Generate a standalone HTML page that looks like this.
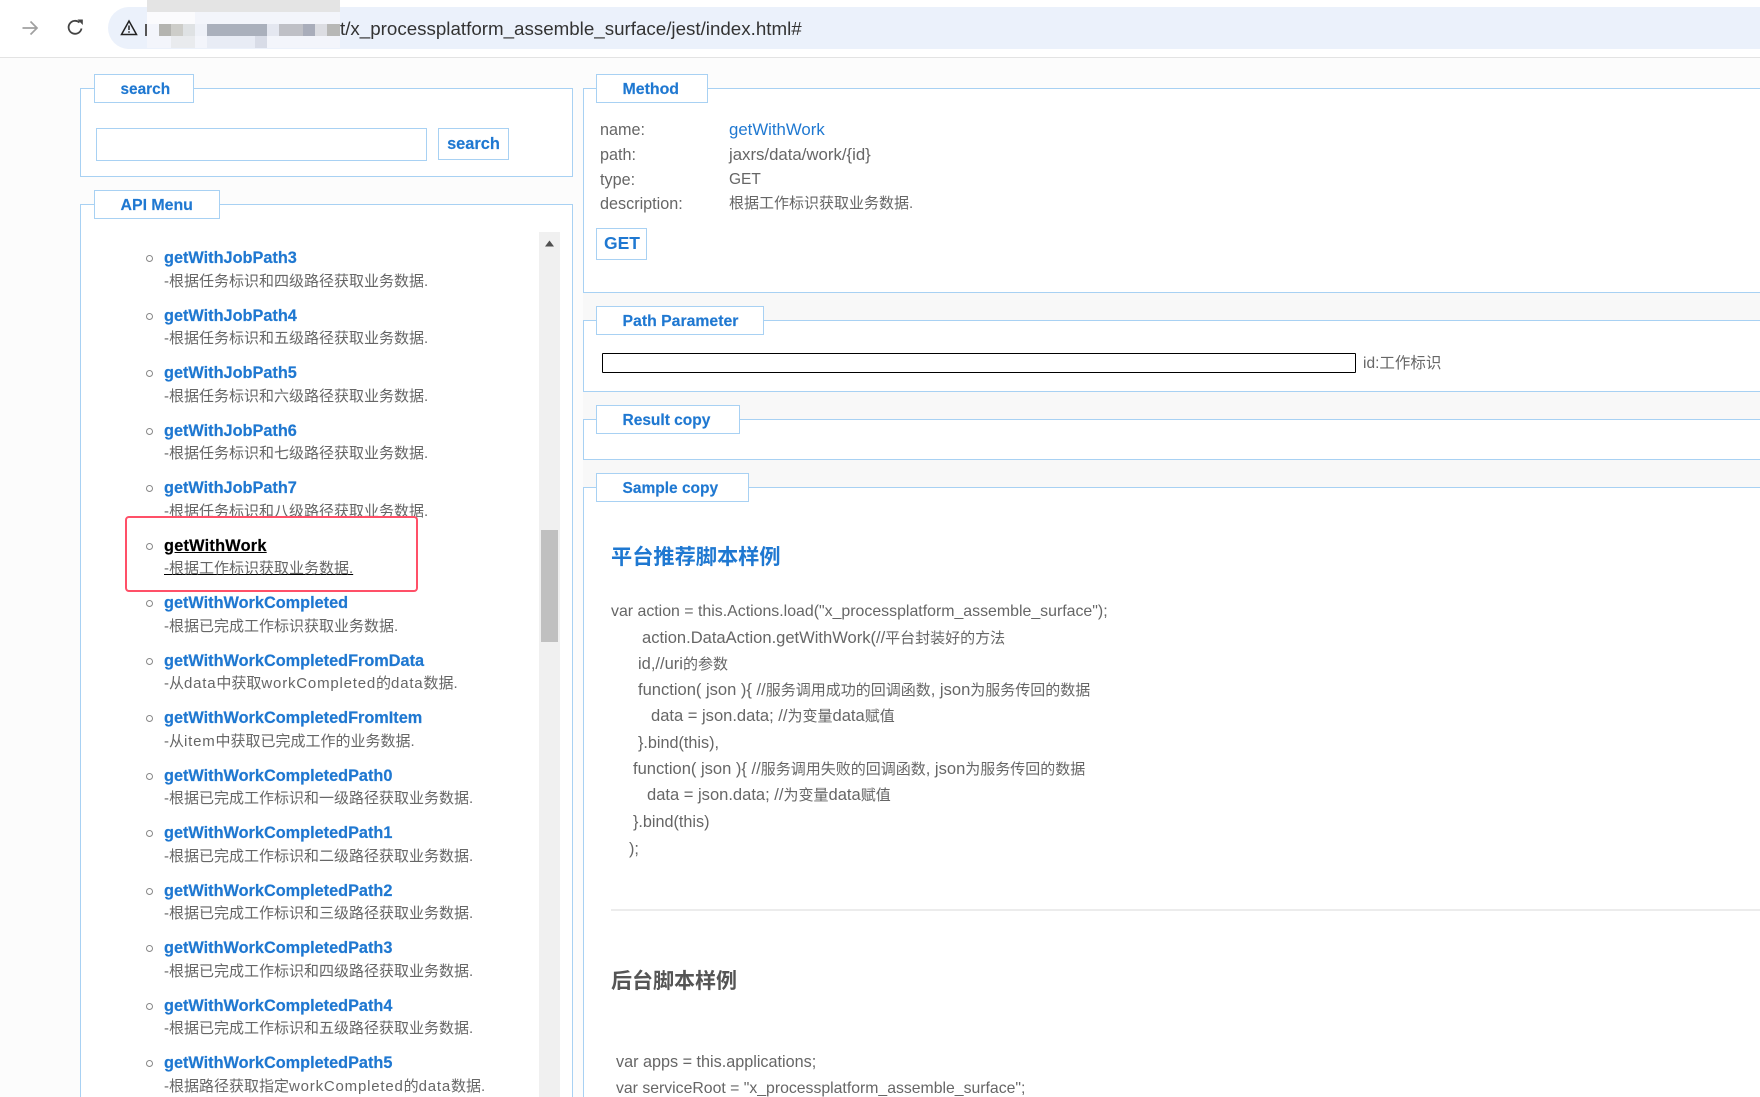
<!DOCTYPE html>
<html lang="zh">
<head>
<meta charset="utf-8">
<title>jest</title>
<style>
html,body{margin:0;padding:0;width:1760px;height:1097px;overflow:hidden;background:#fcfcfc}
body{position:relative;font-family:"Liberation Sans","Noto Sans CJK SC",sans-serif;font-size:15px;color:#666}
div,span{position:absolute;box-sizing:border-box;white-space:nowrap}
em{font-style:normal}
.fs{border:1.5px solid #a8d1f3;background:#fff}
.lg{border:1.5px solid #a8d1f3;background:#fff;color:#1f78d1;font-weight:bold;font-size:15.9px;line-height:29px;padding-left:25.5px;-webkit-text-stroke:.15px #1f78d1}
.t{left:164px;margin-top:1px;color:#1f78d1;font-weight:bold;font-size:16.3px;line-height:20px;-webkit-text-stroke:.2px #1f78d1}
.d{left:164px;margin-top:2px;color:#666;font-size:15px;line-height:20px}
.d em{letter-spacing:.8px}
.b{left:146px;margin-top:1px;width:7px;height:7px;border:1.5px solid #888;border-radius:50%;background:#fff}
.r{left:600px;font-size:16.2px;line-height:20px;color:#666}
.v{left:729px;font-size:16.8px;line-height:20px;color:#666}
.c{font-size:16.2px;line-height:20px;color:#666}
.c em{font-size:15px}
.h{margin-top:1px;font-size:21.2px;line-height:28px;font-weight:bold}
.m{height:12px}
</style>
</head>
<body>
<!-- toolbar -->
<div style="left:0;top:0;width:1760px;height:58px;background:#fff;border-bottom:1.5px solid #e3e3e3"></div>
<svg style="position:absolute;left:20px;top:18px" width="20" height="20" viewBox="0 0 20 20"><path d="M2.500 10H17M10.500 3.500L17 10L10.500 16.500" fill="none" stroke="#a0a0a0" stroke-width="1.700"/></svg>
<svg style="position:absolute;left:65px;top:17px" width="21" height="21" viewBox="0 0 21 21"><path d="M16.500 11.500A6.500 6.500 0 1 1 14.500 5.500" fill="none" stroke="#444" stroke-width="1.800"/><path d="M12.500 2.500H17.800V8Z" fill="#444"/></svg>
<div style="left:108px;top:7px;width:1680px;height:42px;background:#ebf1fb;border-radius:21px"></div>
<svg style="position:absolute;left:120px;top:19px" width="18" height="17" viewBox="0 0 18 17"><path d="M9 2L16.500 15.500H1.500Z" fill="none" stroke="#222" stroke-width="1.500"/><path d="M9 6.500V11M9 12.200V13.800" stroke="#222" stroke-width="1.500"/></svg>
<span style="left:340px;top:18px;font-size:18.75px;line-height:22px;color:#333">t/x_processplatform_assemble_surface/jest/index.html#</span>
<!-- redaction mosaic -->
<div style="left:147px;top:0;width:193px;height:12px;background:#e4e4e4"></div>
<div style="left:147px;top:12px;width:193px;height:36px;background:#f3f5fb"></div>
<div class="m" style="left:159px;top:24px;width:12px;background:#b4b4b0"></div>
<div class="m" style="left:171px;top:24px;width:12px;background:#cdcdc9"></div>
<div class="m" style="left:183px;top:24px;width:12px;background:#dfe2e4"></div>
<div class="m" style="left:195px;top:24px;width:12px;background:#eef1f8"></div>
<div class="m" style="left:207px;top:24px;width:60px;background:#aab0bc"></div>
<div class="m" style="left:267px;top:24px;width:12px;background:#e4e7f0"></div>
<div class="m" style="left:279px;top:24px;width:24px;background:#bfc0c6"></div>
<div class="m" style="left:303px;top:24px;width:12px;background:#a9adba"></div>
<div class="m" style="left:315px;top:24px;width:12px;background:#dcdde2"></div>
<div class="m" style="left:327px;top:24px;width:13px;background:#b8b8b6"></div>
<div class="m" style="left:171px;top:36px;width:24px;background:#e9ebee"></div>
<div class="m" style="left:207px;top:36px;width:48px;background:#e8ecf5"></div>
<div class="m" style="left:255px;top:36px;width:12px;background:#d8dce7"></div>
<div class="m" style="left:147px;top:12px;width:48px;background:#fbfbfd"></div>
<div style="left:145px;top:24px;width:2px;height:12px;background:#555"></div>

<!-- strips -->
<div style="left:583px;top:292px;width:1177px;height:28px;background:#f8f8f8"></div>
<div style="left:583px;top:391px;width:1177px;height:28px;background:#f8f8f8"></div>
<div style="left:583px;top:459px;width:1177px;height:28px;background:#f8f8f8"></div>

<!-- search -->
<div class="fs" style="left:80px;top:88px;width:493px;height:89px"></div>
<div class="lg" style="left:94px;top:74px;width:100px;height:29px;font-size:15.4px;line-height:30px">search</div>
<div style="left:96px;top:128px;width:331px;height:33px;border:1.5px solid #a8d1f3;background:#fff"></div>
<div style="left:438px;top:128px;width:71px;height:32px;border:1.5px solid #a8d1f3;background:#fff;color:#1f78d1;font-weight:bold;font-size:16.4px;line-height:31px;text-align:center;-webkit-text-stroke:.15px #1f78d1">search</div>

<!-- api menu -->
<div class="fs" style="left:80px;top:204px;width:493px;height:920px"></div>
<div class="lg" style="left:94px;top:190px;width:126px;height:29px">API Menu</div>
<div style="left:539px;top:232px;width:21px;height:865px;background:#f0f0f0"></div>
<svg style="position:absolute;left:544px;top:240px" width="11" height="7" viewBox="0 0 11 7"><path d="M5.500 0.500L10 6.500H1Z" fill="#505050"/></svg>
<div style="left:541px;top:530px;width:17px;height:112px;background:#c0c0c0"></div>

<div class="b" style="top:254px"></div><div class="t" style="top:247px">getWithJobPath3</div><div class="d" style="top:270px">-根据任务标识和四级路径获取业务数据.</div>
<div class="b" style="top:312px"></div><div class="t" style="top:305px">getWithJobPath4</div><div class="d" style="top:327px">-根据任务标识和五级路径获取业务数据.</div>
<div class="b" style="top:369px"></div><div class="t" style="top:362px">getWithJobPath5</div><div class="d" style="top:385px">-根据任务标识和六级路径获取业务数据.</div>
<div class="b" style="top:427px"></div><div class="t" style="top:420px">getWithJobPath6</div><div class="d" style="top:442px">-根据任务标识和七级路径获取业务数据.</div>
<div class="b" style="top:484px"></div><div class="t" style="top:477px">getWithJobPath7</div><div class="d" style="top:500px">-根据任务标识和八级路径获取业务数据.</div>

<div style="left:125px;top:516px;width:293px;height:76px;border:2.5px solid #ff5068;border-radius:4px;background:#fff"></div>
<div class="b" style="top:542px"></div><div class="t" style="top:535px;color:#000;-webkit-text-stroke:.2px #000;text-decoration:underline;letter-spacing:.25px">getWithWork</div><div class="d" style="top:557px;text-decoration:underline;text-decoration-color:#000">-根据工作标识获取业务数据.</div>

<div class="b" style="top:599px"></div><div class="t" style="top:592px">getWithWorkCompleted</div><div class="d" style="top:615px">-根据已完成工作标识获取业务数据.</div>
<div class="b" style="top:657px"></div><div class="t" style="top:650px">getWithWorkCompletedFromData</div><div class="d" style="top:672px">-从<em>data</em>中获取<em>workCompleted</em>的<em>data</em>数据.</div>
<div class="b" style="top:714px"></div><div class="t" style="top:707px">getWithWorkCompletedFromItem</div><div class="d" style="top:730px">-从<em>item</em>中获取已完成工作的业务数据.</div>
<div class="b" style="top:772px"></div><div class="t" style="top:765px">getWithWorkCompletedPath0</div><div class="d" style="top:787px">-根据已完成工作标识和一级路径获取业务数据.</div>
<div class="b" style="top:829px"></div><div class="t" style="top:822px">getWithWorkCompletedPath1</div><div class="d" style="top:845px">-根据已完成工作标识和二级路径获取业务数据.</div>
<div class="b" style="top:887px"></div><div class="t" style="top:880px">getWithWorkCompletedPath2</div><div class="d" style="top:902px">-根据已完成工作标识和三级路径获取业务数据.</div>
<div class="b" style="top:944px"></div><div class="t" style="top:937px">getWithWorkCompletedPath3</div><div class="d" style="top:960px">-根据已完成工作标识和四级路径获取业务数据.</div>
<div class="b" style="top:1002px"></div><div class="t" style="top:995px">getWithWorkCompletedPath4</div><div class="d" style="top:1017px">-根据已完成工作标识和五级路径获取业务数据.</div>
<div class="b" style="top:1059px"></div><div class="t" style="top:1052px">getWithWorkCompletedPath5</div><div class="d" style="top:1075px">-根据路径获取指定<em>workCompleted</em>的<em>data</em>数据.</div>

<!-- method -->
<div class="fs" style="left:583px;top:88px;width:1190px;height:205px"></div>
<div class="lg" style="left:596px;top:74px;width:112px;height:29px">Method</div>
<div class="r" style="top:120px">name:</div><div class="v" style="top:120px;color:#1f78d1">getWithWork</div>
<div class="r" style="top:145px">path:</div><div class="v" style="top:145px">jaxrs/data/work/{id}</div>
<div class="r" style="top:170px">type:</div><div class="v" style="top:170px;font-size:15.5px">GET</div>
<div class="r" style="top:194px">description:</div><div class="v" style="top:194px;font-size:15px">根据工作标识获取业务数据.</div>
<div style="left:596px;top:228px;width:51px;height:32px;border:1.5px solid #a8d1f3;background:#fff;color:#1f78d1;font-weight:bold;font-size:17.5px;line-height:29px;text-align:center;padding-left:1px">GET</div>

<!-- path -->
<div class="fs" style="left:583px;top:320px;width:1190px;height:72px"></div>
<div class="lg" style="left:596px;top:306px;width:168px;height:29px;font-size:15.8px">Path Parameter</div>
<div style="left:602px;top:353px;width:754px;height:20px;border:1.5px solid #000;background:#fff;border-radius:1px"></div>
<div class="r" style="left:1363px;top:354px;font-size:15.5px">id:工作标识</div>

<!-- result -->
<div class="fs" style="left:583px;top:419px;width:1190px;height:41px"></div>
<div class="lg" style="left:596px;top:405px;width:144px;height:29px;font-size:15.5px">Result copy</div>

<!-- sample -->
<div class="fs" style="left:583px;top:487px;width:1190px;height:640px"></div>
<div class="lg" style="left:596px;top:473px;width:153px;height:29px;font-size:15.5px">Sample copy</div>

<div class="h" style="left:611px;top:543px;color:#1f78d1">平台推荐脚本样例</div>
<div class="c" style="left:611px;top:602px;font-size:15.9px">var action = this.Actions.load("x_processplatform_assemble_surface");</div>
<div class="c" style="left:642px;top:628px;font-size:16.55px">action.DataAction.getWithWork(//<em>平台封装好的方法</em></div>
<div class="c" style="left:638px;top:654px;font-size:16.5px">id,//uri<em>的参数</em></div>
<div class="c" style="left:638px;top:680px;font-size:16.55px">function( json ){ //<em>服务调用成功的回调函数</em>, json<em>为服务传回的数据</em></div>
<div class="c" style="left:651px;top:706px;font-size:16.55px">data = json.data; //<em>为变量</em>data<em>赋值</em></div>
<div class="c" style="left:638px;top:733px">}.bind(this),</div>
<div class="c" style="left:633px;top:759px;font-size:16.55px">function( json ){ //<em>服务调用失败的回调函数</em>, json<em>为服务传回的数据</em></div>
<div class="c" style="left:647px;top:785px;font-size:16.55px">data = json.data; //<em>为变量</em>data<em>赋值</em></div>
<div class="c" style="left:633px;top:812px">}.bind(this)</div>
<div class="c" style="left:629px;top:839px">);</div>
<div style="left:611px;top:909px;width:1149px;height:1.5px;background:#ececec"></div>
<div class="h" style="left:611px;top:967px;color:#555;font-size:21px">后台脚本样例</div>
<div class="c" style="left:616px;top:1052px">var apps = this.applications;</div>
<div class="c" style="left:616px;top:1079px;font-size:15.8px">var serviceRoot = "x_processplatform_assemble_surface";</div>
</body>
</html>
